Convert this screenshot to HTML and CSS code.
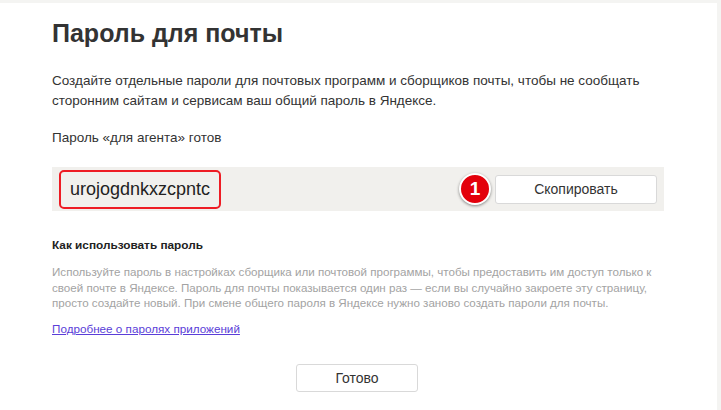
FILE: index.html
```html
<!DOCTYPE html>
<html lang="ru">
<head>
    <meta charset="UTF-8">
    <meta name="viewport" content="width=device-width, initial-scale=1.0">
    <title>Пароль для почты</title>
    <link rel="stylesheet" href="styles.css">
</head>
<body>
    <div id="card">
        <h1>Пароль для почты</h1>
        <p class="intro">Создайте отдельные пароли для почтовых программ и сборщиков почты, чтобы не сообщать сторонним сайтам и сервисам ваш общий пароль в Яндексе.</p>

        <p class="ready">Пароль «для агента» готов</p>

        <div id="password-row">
            <div class="password">urojogdnkxzcpntc</div>
            <span class="step">1</span>
            <button class="btn btn-copy">Скопировать</button>
        </div>

        <h2>Как использовать пароль</h2>
        <p class="hint">Используйте пароль в настройках сборщика или почтовой программы, чтобы предоставить им доступ только к своей почте в Яндексе. Пароль для почты показывается один раз — если вы случайно закроете эту страницу, просто создайте новый. При смене общего пароля в Яндексе нужно заново создать пароли для почты.</p>

        <a class="more" href="#">Подробнее о паролях приложений</a>

        <div class="actions">
            <button class="btn btn-done">Готово</button>
        </div>
    </div>
</body>
</html>
```

FILE: styles.css
```css
html, body {
    height: 100%;
}
body {
    margin: 0;
    background: #f4f4f2;
    font-family: "Liberation Sans", Arial, sans-serif;
    color: #333;
}
#card {
    box-sizing: border-box;
    width: 717px;
    min-height: calc(100% - 3px);
    margin-top: 3px;
    padding: 15px 53px 0 52px;
    background: #fff;
}
h1 {
    margin: 0;
    font-size: 25px;
    line-height: 30px;
    font-weight: bold;
    color: #333;
}
.intro {
    margin: 23px 0 0;
    font-size: 13.5px;
    line-height: 20px;
}
.ready {
    margin: 18px 0 0;
    font-size: 13.5px;
    line-height: 18px;
}
#password-row {
    display: flex;
    align-items: center;
    height: 44px;
    margin-top: 20px;
    padding: 0 7px;
    background: #f1f0ed;
}
.password {
    box-sizing: border-box;
    width: 162px;
    height: 39px;
    padding: 0 9px;
    border: 2px solid #ee1c24;
    border-radius: 5px;
    font-size: 18px;
    line-height: 35px;
    color: #222;
}
.step {
    width: 28px;
    height: 28px;
    margin-left: auto;
    margin-right: 4px;
    border: 2px solid #fff;
    border-radius: 50%;
    background: #e3000b;
    box-shadow: 0 1px 3px rgba(0, 0, 0, 0.45);
    color: #fff;
    font-size: 19px;
    font-weight: bold;
    line-height: 28px;
    text-align: center;
}
.btn {
    box-sizing: border-box;
    background: #fff;
    border: 1px solid #d9d9d9;
    border-radius: 3px;
    font-family: inherit;
    font-size: 14px;
    color: #333;
    cursor: pointer;
}
.btn-copy {
    width: 162px;
    height: 29px;
}
h2 {
    margin: 26px 0 0;
    font-size: 11.8px;
    line-height: 16px;
    font-weight: bold;
    color: #222;
}
.hint {
    margin: 11px 0 0;
    font-size: 11.6px;
    line-height: 15.5px;
    color: #a3a3a3;
}
.more {
    display: inline-block;
    margin-top: 10px;
    font-size: 11.7px;
    line-height: 16px;
    color: #5a3ed8;
}
.actions {
    display: flex;
    justify-content: center;
    margin-top: 27px;
    padding-right: 2px;
}
.btn-done {
    width: 122px;
    height: 28px;
}
```
